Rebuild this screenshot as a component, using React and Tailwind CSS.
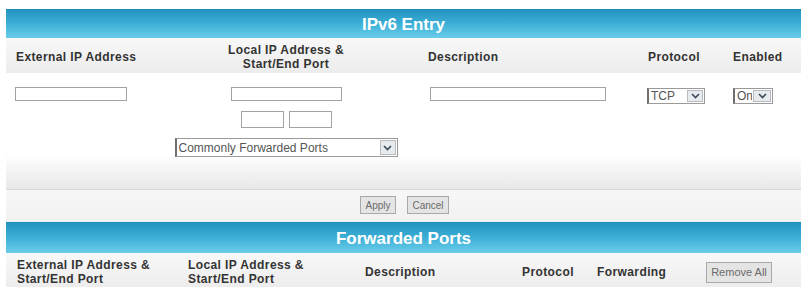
import React from "react";

const font = { fontFamily: '"Liberation Sans", Arial, sans-serif' };

function Chevron() {
  return (
    <svg width="9" height="6" viewBox="0 0 9 6" className="block">
      <path d="M1 1 L4.5 4.5 L8 1" fill="none" stroke="#3a4a5a" strokeWidth="1.6" />
    </svg>
  );
}

function FakeSelect({ label, className, arrowWidth = "w-[16px]" }) {
  return (
    <div
      className={`flex items-stretch border border-[#9a9a9a] border-l-2 border-l-[#6f6f6f] bg-white ${className}`}
    >
      <span className="flex-1 pl-[2px] text-[12px] leading-none flex items-center text-[#555] whitespace-nowrap overflow-hidden">
        {label}
      </span>
      <span
        className={`${arrowWidth} m-[1px] flex items-center justify-center bg-[#e8ebee] border border-[#b8bcc0]`}
      >
        <Chevron />
      </span>
    </div>
  );
}

function TextBox({ className }) {
  return <div className={`border border-[#a3a3a3] bg-white ${className}`} />;
}

function BlueBar({ title, className }) {
  return (
    <div
      className={`flex items-center justify-center bg-gradient-to-b from-[#2394c0] via-[#3db0d7] to-[#6acde9] border-t border-[#1f8db8] ${className}`}
    >
      <span className="text-white font-bold text-[17px] leading-none">{title}</span>
    </div>
  );
}

function SmallButton({ children, className }) {
  return (
    <div
      className={`flex items-center justify-center bg-[#e4e4e4] border border-[#a9a9a9] text-[10px] text-[#6a6a6a] ${className}`}
    >
      {children}
    </div>
  );
}

export default function App() {
  return (
    <div className="w-[804px] h-[287px] overflow-hidden bg-white" style={font}>
      <div className="ml-[6px] w-[795px] pt-[9px]">
        <BlueBar title="IPv6 Entry" className="h-[29px]" />

        {/* header row */}
        <div className="flex h-[35px] items-center pt-[2px] bg-gradient-to-b from-[#f8f8f8] to-[#ececec] text-[12px] font-bold tracking-[0.4px] text-[#333] leading-[14px]">
          <div className="w-[164px] pl-[10px]">External IP Address</div>
          <div className="w-[232px] text-center">
            Local IP Address &amp;
            <br />
            Start/End Port
          </div>
          <div className="w-[238px] pl-[26px]">Description</div>
          <div className="w-[87px] pl-[8px]">Protocol</div>
          <div className="flex-1 pl-[6px]">Enabled</div>
        </div>

        {/* entry row */}
        <div className="flex h-[117px] pt-[14px] bg-gradient-to-b from-white via-white via-70% to-[#e8e8e8] border-b border-[#d8d8d8]">
          <div className="w-[164px] pl-[9px]">
            <TextBox className="w-[112px] h-[14px]" />
          </div>
          <div className="w-[232px] flex flex-col items-center gap-[10px]">
            <TextBox className="w-[111px] h-[14px]" />
            <div className="flex gap-[5px]">
              <TextBox className="w-[43px] h-[17px]" />
              <TextBox className="w-[43px] h-[17px]" />
            </div>
            <FakeSelect label="Commonly Forwarded Ports" className="w-[223px] h-[19px]" />
          </div>
          <div className="w-[238px] pl-[28px]">
            <TextBox className="w-[176px] h-[14px]" />
          </div>
          <div className="w-[87px] pl-[7px] pt-[1px]">
            <FakeSelect label="TCP" className="w-[58px] h-[16px]" />
          </div>
          <div className="flex-1 pl-[6px] pt-[1px]">
            <FakeSelect label="On" className="w-[40px] h-[16px]" arrowWidth="w-[18px]" />
          </div>
        </div>

        {/* buttons row */}
        <div className="flex h-[32px] justify-center items-start pt-[6px] gap-[11px] bg-gradient-to-b from-[#f7f7f7] to-[#f1f1f1] pl-[2px]">
          <SmallButton className="w-[36px] h-[18px]">Apply</SmallButton>
          <SmallButton className="w-[42px] h-[18px]">Cancel</SmallButton>
        </div>

        <BlueBar title="Forwarded Ports" className="h-[31px]" />

        {/* forwarded header */}
        <div className="flex items-center h-[36px] pt-[2px] bg-gradient-to-b from-[#f8f8f8] to-[#ececec] text-[12px] font-bold tracking-[0.4px] text-[#333] leading-[14px]">
          <div className="w-[176px] pl-[11px]">
            External IP Address &amp;
            <br />
            Start/End Port
          </div>
          <div className="w-[177px] pl-[6px]">
            Local IP Address &amp;
            <br />
            Start/End Port
          </div>
          <div className="w-[157px] pl-[6px]">Description</div>
          <div className="w-[75px] pl-[6px]">Protocol</div>
          <div className="w-[109px] pl-[6px]">Forwarding</div>
          <div className="flex-1 pl-[6px]">
            <SmallButton className="w-[66px] h-[21px] text-[11px] font-normal tracking-normal">
              Remove All
            </SmallButton>
          </div>
        </div>
      </div>
    </div>
  );
}
